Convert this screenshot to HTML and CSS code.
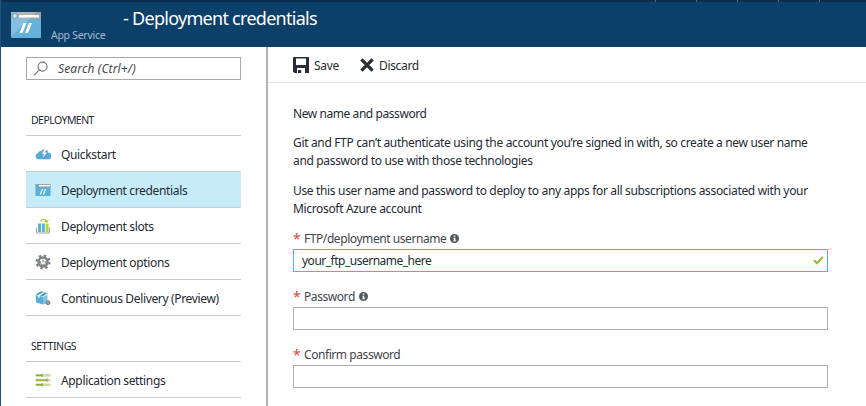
FILE: index.html
```
<!DOCTYPE html>
<html lang="en">
<head>
<meta charset="utf-8">
<title>Deployment credentials</title>
<link rel="stylesheet" href="styles.css">
</head>
<body>
<div class="blade">
  <div class="topstrip"><i></i><i></i><i></i><i></i><i></i></div>
  <header class="header">
    <svg class="app-icon" width="30" height="26" viewBox="0 0 30 26">
      <rect width="30" height="26" rx="1" fill="#64b1d9"/>
      <path d="M0 7h30V1a1 1 0 0 0-1-1H1a1 1 0 0 0-1 1z" fill="#a0a1a2"/>
      <path d="M0 1a1 1 0 0 1 1-1h24L0 25z" fill="#fff" opacity=".2"/>
      <rect x="8" y="3" width="20" height="2.5" fill="#fff"/>
      <circle cx="3.8" cy="4" r="3" fill="#64b1d9"/>
      <path d="M1.8 4h4M3.8 2v4" stroke="#fff" stroke-width="1"/>
      <path d="M12.5 11h3l-4 10h-3zM18 11h3l-4 10h-3z" fill="#fff"/>
    </svg>
    <span class="service">App Service</span>
    <h1 class="title">- Deployment credentials</h1>
  </header>
  <div class="body">
    <nav class="sidebar">
      <div class="search">
        <svg width="16" height="16" viewBox="0 0 16 16" fill="none" stroke="#707478" stroke-width="1.1"><circle cx="9.6" cy="5.6" r="4.5"/><path d="M6.4 8.8L.8 14.4"/></svg>
        <span class="search-text">Search (Ctrl+/)</span>
      </div>
      <h2 class="group">DEPLOYMENT</h2>
      <ul class="menu">
        <li class="item">
          <svg width="16" height="16" viewBox="0 0 16 16"><path d="M3.3 13.2a3 3 0 0 1-.4-5.900A3 3 0 0 1 6 5a4 4 0 0 1 7.300 1.800 3.200 3.200 0 0 1 0 6.400z" fill="#59a9d3"/><path d="M9.900 2.500L7 8h2l-1 3.500L12 6.500H9.800L12 2.500z" fill="#fff"/></svg>
          <span class="t1">Quickstart</span></li>
        <li class="item selected">
          <svg width="16" height="16" viewBox="0 0 16 16"><path d="M.5 2h15v12H.5z" fill="#59b0d8"/><path d="M.5 2h15v3.500H.5z" fill="#a0a5aa"/><path d="M4 3h11v1.300H4z" fill="#fff"/><circle cx="2.300" cy="3.700" r="1.200" fill="#59b0d8"/><path d="M6.800 7h1.300L6 12.500H4.700zM9.800 7h1.300L9 12.500H7.700z" fill="#fff"/></svg>
          <span class="t2">Deployment credentials</span></li>
        <li class="item">
          <svg width="16" height="16" viewBox="0 0 16 16"><path d="M1.500 9.500v5.500h13V9.500" fill="none" stroke="#a0a1a2"/><path d="M3 5.500h3V14H3zM6.800 5.500h3V14h-3z" fill="#59b0d8"/><path d="M10.600 5.500h3V14h-3z" fill="#b8d432"/><path d="M5.500 3.800C6.500.5 10.500.5 11.700 3.500M9.500 2.700l2.400 1.500L13.400 2" fill="none" stroke="#b0c92e" stroke-width="1.200"/></svg>
          <span class="t3">Deployment slots</span></li>
        <li class="item">
          <svg width="16" height="16" viewBox="0 0 16 16"><circle cx="8" cy="8" r="4.500" fill="none" stroke="#7e8082" stroke-width="2.500"/><circle cx="8" cy="8" r="6.500" fill="none" stroke="#7e8082" stroke-width="2" stroke-dasharray="2.500 2.605"/><path d="M8 5.500v3M6 7a2.500 2.500 0 1 0 4 0" fill="none" stroke="#7e8082" stroke-width="1"/></svg>
          <span class="t4">Deployment options</span></li>
        <li class="item">
          <svg width="16" height="16" viewBox="0 0 16 16"><path d="M.8 5L8 6.700v7.800L1 12.500z" fill="#58aed8"/><path d="M8 6.700l4.500-2v8.600L8 14.500z" fill="#80c5e4"/><path d="M.8 4.500L6 1.300l6.500 2L8 6.200z" fill="#439dcc"/><path d="M3 5.200L8 2.200l1.700.5L4.600 5.700v2L3 7.300z" fill="#fff"/><circle cx="13" cy="12.700" r="2" fill="#999" stroke="#7c8185" stroke-width="1"/></svg>
          <span class="t5">Continuous Delivery (Preview)</span></li>
      </ul>
      <h2 class="group settings"><span>SETTINGS</span></h2>
      <ul class="menu">
        <li class="item">
          <svg width="16" height="16" viewBox="0 0 16 16"><path d="M.500 2h15v2.700h-15zM.500 6.700h15v2.700h-15zM.500 11.400h15v2.700h-15z" fill="#ccd9a0"/><path d="M1 2.700h6v1.300H1zM1 7.400h10.500v1.300H1zM1 12.100h6v1.300H1z" fill="#89ae20"/><path d="M6.500 1.700h1v3.300h-1zM11.500 6.400h1v3.300h-1zM6.500 11.100h1v3.300h-1z" fill="#7c858a"/></svg>
          <span class="t6">Application settings</span></li>
      </ul>
    </nav>
    <main class="main">
      <div class="toolbar">
        <svg width="16" height="16" viewBox="0 0 16 16"><path fill-rule="evenodd" d="M1 0h14a1 1 0 0 1 1 1v15h-4v-5H4v5H1.500L0 14.500V1a1 1 0 0 1 1-1zM3 1.500V8h10V1.500z" fill="#292e38"/><path d="M5 13h3.200v3H5z" fill="#292e38"/></svg>
        <span class="save">Save</span>
        <svg class="discard-icon" width="14" height="14" viewBox="0 0 14 14"><path d="M1.400 1.400l11.200 11.200M12.600 1.400L1.400 12.600" stroke="#292e38" stroke-width="3.300"/></svg>
        <span class="discard">Discard</span>
      </div>
      <div class="content">
        <p class="intro">New name and password</p>
        <p><span class="p1">Git and FTP can’t authenticate using the account you’re signed in with, so create a new user name</span><br><span class="p2">and password to use with those technologies</span></p>
        <p><span class="p3">Use this user name and password to deploy to any apps for all subscriptions associated with your</span><br><span class="p4">Microsoft Azure account</span></p>
        <div class="field">
          <div class="label"><b>*</b><span class="l1">FTP/deployment username</span><svg width="9" height="9" viewBox="0 0 9 9"><circle cx="4.500" cy="4.500" r="4.500" fill="#53585c"/><path d="M3.800 1.500h1.600v1.300H3.800zM3.200 3.700h2.200v2.700h.7v.9H3.100v-.9h.8V4.500h-.7z" fill="#fff"/></svg></div>
          <div class="input active"><span class="value">your_ftp_username_here</span><svg width="11" height="9" viewBox="0 0 11 9"><path d="M1 4.200l3 3L9.800 1" fill="none" stroke="#97b92b" stroke-width="2"/></svg></div>
        </div>
        <div class="field">
          <div class="label"><b>*</b><span class="l2">Password</span><svg width="9" height="9" viewBox="0 0 9 9"><circle cx="4.500" cy="4.500" r="4.500" fill="#53585c"/><path d="M3.800 1.500h1.600v1.300H3.800zM3.200 3.700h2.200v2.700h.7v.9H3.100v-.9h.8V4.500h-.7z" fill="#fff"/></svg></div>
          <div class="input"></div>
        </div>
        <div class="field">
          <div class="label"><b>*</b><span class="l3">Confirm password</span></div>
          <div class="input"></div>
        </div>
      </div>
    </main>
  </div>
</div>
</body>
</html>
```
FILE: styles.css
```
* { box-sizing: border-box; }
body { margin: 0; font: 12px/18px "Noto Sans", "Open Sans", sans-serif; letter-spacing: -.34px; color: #252a33; background: #fff; overflow: hidden; }
h1, h2, p, ul { margin: 0; padding: 0; font-weight: 400; }
span, h1 { white-space: nowrap; }
svg { display: block; flex: none; }
.blade { height: 406px; display: flex; flex-direction: column; border-left: 1px solid #205385; }
.topstrip { height: 2px; background: #0a2f50; display: flex; gap: 40px; padding-left: 654px; }
.topstrip i { width: 1px; height: 2px; background: #52677b; }
.header { height: 45px; background: #0d4069; display: flex; align-items: flex-start; padding-left: 10px; color: #fff; }
.app-icon { margin-top: 10px; }
.service { width: 72px; margin: 24px 0 0 10px; font-size: 10.5px; letter-spacing: -.28px; color: #a2bad0; }
.title { font-size: 18px; line-height: 24px; margin-top: 4px; letter-spacing: -.72px; }
.body { flex: 1; display: flex; min-height: 0; }
.sidebar { width: 267px; border-right: 2px solid #b2b2b2; padding: 10px 25px 0; flex: none; }
.search { width: 215px; height: 23px; border: 1px solid #a6a8aa; display: flex; align-items: center; padding-left: 6px; gap: 9px; font-style: italic; letter-spacing: .13px; color: #42474d; }
.group { width: 215px; height: 56px; padding: 31px 0 0 5px; border-bottom: 1px solid #c9cbcc; font-size: 10.5px; line-height: 18px; letter-spacing: -.55px; }
.settings { height: 46px; padding-top: 21px; letter-spacing: -.4px; }
.menu { list-style: none; width: 215px; }
.item { height: 36px; display: flex; align-items: center; gap: 10px; padding-left: 9px; border-bottom: 1px solid #c9cbcc; }
.item span { padding-top: 2px; }
.selected { background: #c6ecfa; }
.main { flex: 1; min-width: 0; }
.toolbar { height: 36px; border-bottom: 1px solid #e0e1e2; display: flex; align-items: center; padding-left: 25px; }
.toolbar span { padding-top: 2px; }
.save { width: 46px; margin-left: 5px; }
.discard { margin-left: 5px; }
.content { width: 560px; padding: 22px 0 0 25px; }
.content p { margin-bottom: 12px; height: 36px; }
.content p.intro { height: 18px; margin-bottom: 11px; letter-spacing: -.43px; }
.field { width: 535px; height: 58px; }
.label { height: 19px; display: flex; align-items: center; padding-bottom: 2px; color: #3f444a; letter-spacing: -.43px; }
.label b { width: 11px; font: 14px/18px "Noto Sans", sans-serif; color: #d8473f; height: 18px; }
.label svg { margin-left: 4px; }
.input { height: 23px; border: 1px solid #acafb1; display: flex; align-items: center; justify-content: space-between; padding: 0 3px 0 8px; letter-spacing: -.5px; }
.active { border-color: #48b7e8; }
```
